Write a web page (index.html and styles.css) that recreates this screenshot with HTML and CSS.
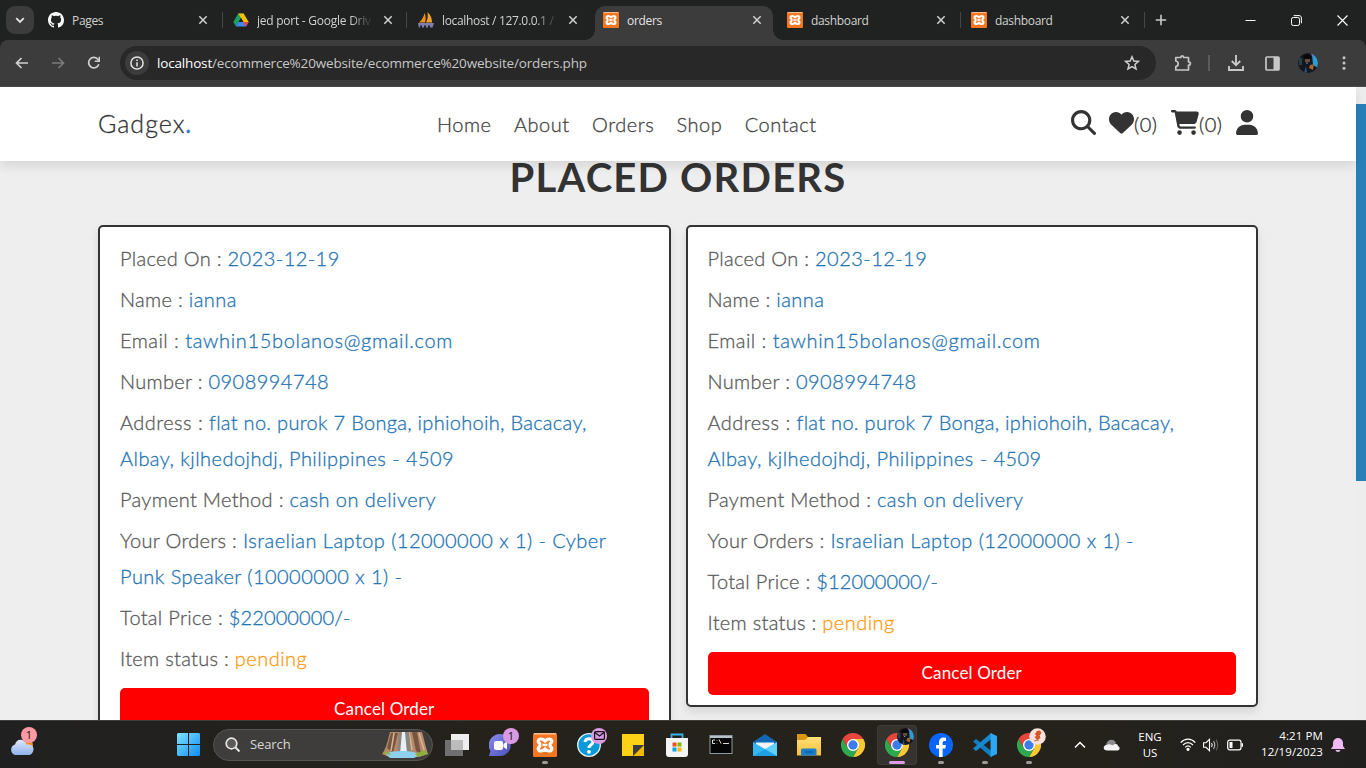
FILE: index.html
```html
<!DOCTYPE html>
<html lang="en">
<head>
<meta charset="utf-8">
<title>orders</title>
<link rel="stylesheet" href="styles.css">
</head>
<body>
<svg width="0" height="0" class="defs">
  <defs>
    <linearGradient id="winG" x1="0" y1="0" x2="1" y2="1"><stop offset="0" stop-color="#7fe3ff"/><stop offset="1" stop-color="#0f8cf5"/></linearGradient>
    <linearGradient id="cloudG" x1="0" y1="0" x2="0" y2="1"><stop offset="0" stop-color="#dfe9fb"/><stop offset="1" stop-color="#8fb2ec"/></linearGradient>
    <linearGradient id="folderG" x1="0" y1="0" x2="0" y2="1"><stop offset="0" stop-color="#ffe07a"/><stop offset="1" stop-color="#f9bf35"/></linearGradient>
    <linearGradient id="chatG" x1="0" y1="0" x2="1" y2="1"><stop offset="0" stop-color="#8a8df0"/><stop offset="1" stop-color="#4a4fb8"/></linearGradient>
  </defs>
  <symbol id="xampp" viewBox="0 0 24 24">
    <rect width="24" height="24" rx="1.5" fill="#f37623"/><rect x="1" width="22" height="1.6" fill="#fbb98a"/>
    <path d="M8 6C5 6 4.200 9 6.800 10.600V13.400C4.200 15 5 18 8 18C10 18 10.800 17.200 12 16C13.200 17.200 14 18 16 18C19 18 19.800 15 17.200 13.400V10.600C19.800 9 19 6 16 6C14 6 13.200 6.800 12 8C10.800 6.800 10 6 8 6Z" fill="none" stroke="#fff" stroke-width="3.200"/>
    <path d="M9.500 12H14.500" stroke="#fff" stroke-width="2.400"/>
  </symbol>
  <symbol id="close" viewBox="0 0 10 10"><path d="M1.300 1.300L8.700 8.700M8.700 1.300L1.300 8.700" stroke="#d0d1d0" stroke-width="1.500" fill="none"/></symbol>
  <symbol id="chrome" viewBox="0 0 48 48">
    <path d="M24 12H44.800A24 24 0 0 1 24 48L34.400 30Z" fill="#fcc934"/>
    <path d="M34.400 30L24 48A24 24 0 0 1 3.200 12L13.600 30Z" fill="#2da94f"/>
    <path d="M13.600 30L3.200 12A24 24 0 0 1 44.800 12H24Z" fill="#e8453c"/>
    <circle cx="24" cy="24" r="12" fill="#fff"/><circle cx="24" cy="24" r="9.300" fill="#3b7ded"/>
  </symbol>
  <symbol id="avatar" viewBox="0 0 20 20">
    <clipPath id="avc"><circle cx="10" cy="10" r="10"/></clipPath>
    <g clip-path="url(#avc)"><rect width="20" height="20" fill="#131820"/><path d="M14 1H20V15L15 12Z" fill="#2f9bd0"/><path d="M12.500 0H15L14.500 4Z" fill="#a857b8"/><path d="M1 5H4V12H1Z" fill="#24404a"/><path d="M7 6H12V9H7Z" fill="#6a4a3a"/><path d="M5 3L9 1L13 3V6H6Z" fill="#090909"/><path d="M12 12L16 11L15 17L11 15Z" fill="#a0672a"/><path d="M8 13L9 20H6Z" fill="#27577f"/><circle cx="9" cy="10" r=".7" fill="#bbb"/></g>
  </symbol>
</svg>

<header class="tabstrip">
  <div class="tabsearch"><svg width="10" height="7" viewBox="0 0 10 7"><path d="M1.200 1.200L5 5L8.800 1.200" fill="none" stroke="#e3e3e3" stroke-width="1.800"/></svg></div>
  <div class="tabs">
    <div class="tab t1">
      <svg class="fav" viewBox="0 0 16 16"><path fill="#fff" d="M8 0C3.580 0 0 3.580 0 8c0 3.540 2.290 6.530 5.470 7.590.4.070.55-.17.55-.38 0-.19-.01-.82-.01-1.490-2.010.37-2.530-.49-2.690-.94-.09-.23-.48-.94-.82-1.130-.28-.15-.68-.52-.01-.53.63-.01 1.080.58 1.230.82.72 1.210 1.870.87 2.330.66.07-.52.28-.87.51-1.070-1.780-.2-3.640-.89-3.640-3.950 0-.87.31-1.590.82-2.150-.08-.2-.36-1.020.08-2.120 0 0 .67-.21 2.200.82.64-.18 1.320-.27 2-.27s1.360.09 2 .27c1.530-1.040 2.200-.82 2.200-.82.44 1.100.16 1.920.08 2.120.51.56.82 1.270.82 2.150 0 3.070-1.870 3.750-3.650 3.950.29.25.54.73.54 1.480 0 1.070-.01 1.930-.01 2.200 0 .21.15.46.55.38A8 8 0 0 0 16 8c0-4.420-3.580-8-8-8z"/></svg>
      <span class="tt">Pages</span><svg class="x"><use href="#close"/></svg>
    </div>
    <div class="tab t2">
      <svg class="fav" viewBox="0 0 16 16"><path d="M5.300 1.500H10.700L8 6L3 14.500L.3 10Z" fill="#1ba260"/><path d="M5.300 1.500H10.700L15.700 10H10.300Z" fill="#fbbc04"/><path d="M5.500 10H15.700L13 14.500H3Z" fill="#4285f4"/><path d="M10.300 10H15.700L13 14.500Z" fill="#ea4335"/><path d="M8 6L10.300 10H5.700Z" fill="#202221"/></svg>
      <span class="tt fade">jed port - Google Driv</span><svg class="x"><use href="#close"/></svg>
    </div>
    <div class="tab t3">
      <svg class="fav" viewBox="0 0 16 16"><path d="M1 10.500C4 8 6 4 6.500 1C8 4 8 8 7 10.500Z" fill="#f29111"/><path d="M8 10.500C10 7 10 3 9.500 0C13 3 14 7 14 10.500Z" fill="#f5a02c"/><path d="M0 11H16L14.500 15.500H12V13.500H10V15.500H8V13.500H6V15.500H4V13.500H2V15.500H.8Z" fill="#7d7fae"/></svg>
      <span class="tt fade">localhost / 127.0.0.1 /</span><svg class="x"><use href="#close"/></svg>
    </div>
    <div class="tab t4 active">
      <svg class="fav"><use href="#xampp"/></svg><span class="tt">orders</span><svg class="x"><use href="#close"/></svg>
    </div>
    <div class="tab t5"><svg class="fav"><use href="#xampp"/></svg><span class="tt">dashboard</span><svg class="x"><use href="#close"/></svg></div>
    <div class="tab t6"><svg class="fav"><use href="#xampp"/></svg><span class="tt">dashboard</span><svg class="x"><use href="#close"/></svg></div>
  </div>
  <svg class="plus" width="12" height="12" viewBox="0 0 12 12"><path d="M6 .8V11.200M.8 6H11.200" stroke="#c9cac9" stroke-width="1.600"/></svg>
  <div class="winctl">
    <svg width="11" height="11" viewBox="0 0 11 11"><path d="M.5 5.500H10.500" stroke="#fff"/></svg>
    <svg width="11" height="11" viewBox="0 0 11 11" fill="none" stroke="#fff"><rect x=".5" y="2.500" width="8" height="8" rx="1.800"/><path d="M2.700 .6H8C9.500.6 10.400 1.500 10.400 3V8.300"/></svg>
    <svg width="11" height="11" viewBox="0 0 11 11"><path d="M.5.5L10.500 10.500M10.500.5L.5 10.500" stroke="#fff" stroke-width="1.100"/></svg>
  </div>
</header>

<div class="toolbar">
  <svg class="back" width="14" height="12" viewBox="0 0 14 12" fill="none" stroke="#d0d0d0" stroke-width="1.700"><path d="M13 6H1.800M6.500 1L1.500 6L6.500 11"/></svg>
  <svg class="fwd" width="14" height="12" viewBox="0 0 14 12" fill="none" stroke="#7b7b7b" stroke-width="1.700"><path d="M1 6H12.200M7.500 1L12.500 6L7.500 11"/></svg>
  <svg class="reload" width="14" height="14" viewBox="0 0 14 14"><path d="M11.800 8.200A5.200 5.200 0 1 1 11 3.500L12.500 5" fill="none" stroke="#d0d0d0" stroke-width="1.700"/><path d="M13 .8V6H7.800V4.500H11.500V.8Z" fill="#d0d0d0"/></svg>
  <div class="omni">
    <span class="info"><svg width="14" height="14" viewBox="0 0 14 14"><circle cx="7" cy="7" r="6.100" fill="none" stroke="#e3e3e3" stroke-width="1.500"/><path d="M7 6.200V10.500M7 3.500V5" stroke="#e3e3e3" stroke-width="1.500"/></svg></span>
    <span class="url"><b>localhost</b>/ecommerce%20website/ecommerce%20website/orders.php</span>
    <svg class="star" width="16" height="16" viewBox="0 0 16 16"><path d="M8 1.800L9.800 6L14.400 6.400L10.900 9.400L12 13.900L8 11.500L4 13.900L5.100 9.400L1.600 6.400L6.200 6Z" fill="none" stroke="#cfcfcf" stroke-width="1.500"/></svg>
  </div>
  <svg class="ext" width="18" height="18" viewBox="0 0 18 18"><path d="M1.800 3.500H6.800C6.800 1.200 9.700 1.200 9.700 3.500H14.500V7.800C17 7.800 17 11.200 14.500 11.200V16H1.800V12.500C5 12 5 7.500 1.800 7Z" fill="none" stroke="#c7c7c7" stroke-width="1.700" stroke-linejoin="round"/></svg>
  <i class="tsep"></i>
  <svg class="dl" width="16" height="16" viewBox="0 0 16 16" fill="none" stroke="#c7c7c7" stroke-width="1.900"><path d="M8 0V9.500M3.800 6L8 10.200L12.200 6M1 11V15H15V11"/></svg>
  <svg class="side" width="15" height="15" viewBox="0 0 15 15"><rect x="1" y="1" width="13" height="13" rx="1" fill="none" stroke="#c7c7c7" stroke-width="1.700"/><path d="M8.500 1H14V14H8.500Z" fill="#c7c7c7"/></svg>
  <svg class="ava" width="20" height="20"><use href="#avatar"/></svg>
  <svg class="dots" width="4" height="14" viewBox="0 0 4 14" fill="#c7c7c7"><circle cx="2" cy="1.700" r="1.500"/><circle cx="2" cy="7" r="1.500"/><circle cx="2" cy="12.300" r="1.500"/></svg>
</div>

<div class="viewport">
  <div class="page">
    <div class="sitehead">
      <a class="logo">Gadgex<span>.</span></a>
      <nav class="nav"><a>Home</a><a>About</a><a>Orders</a><a>Shop</a><a>Contact</a></nav>
      <div class="icons">
        <svg width="25" height="25" viewBox="0 0 512 512"><path d="M416 208c0 45.900-14.900 88.300-40 122.700L502.600 457.400c12.500 12.500 12.500 32.800 0 45.300s-32.800 12.500-45.300 0L330.700 376c-34.400 25.200-76.800 40-122.700 40C93.100 416 0 322.900 0 208S93.100 0 208 0S416 93.100 416 208zM208 352a144 144 0 1 0 0-288 144 144 0 1 0 0 288z"/></svg>
        <span class="heart"><svg width="25" height="25" viewBox="0 0 512 512"><path d="M47.600 300.400L228.300 469.100c7.500 7 17.400 10.900 27.700 10.900s20.200-3.900 27.700-10.900L464.400 300.400c30.400-28.300 47.600-68 47.600-109.500v-5.800c0-69.900-50.500-129.500-119.400-141C347 36.500 300.600 51.400 268 84L256 96 244 84c-32.600-32.600-79-47.500-124.600-39.900C50.500 55.600 0 115.200 0 185.100v5.800c0 41.500 17.200 81.200 47.600 109.500z"/></svg><em>(0)</em></span>
        <span class="cart"><svg width="28" height="25" viewBox="0 0 576 512"><path d="M0 24C0 10.700 10.700 0 24 0H69.500c22 0 41.500 12.800 50.600 32h411c26.300 0 45.500 25 38.600 50.400l-41 152.300c-8.500 31.400-37 53.300-69.500 53.300H170.700l5.400 28.500c2.200 11.300 12.100 19.500 23.600 19.500H488c13.300 0 24 10.700 24 24s-10.700 24-24 24H199.700c-34.600 0-64.300-24.600-70.700-58.500L77.400 54.500c-.7-3.800-4-6.500-7.900-6.500H24C10.700 48 0 37.300 0 24zM128 464a48 48 0 1 1 96 0 48 48 0 1 1-96 0zm336-48a48 48 0 1 1 0 96 48 48 0 1 1 0-96z"/></svg><em>(0)</em></span>
        <svg class="user" width="22" height="25" viewBox="0 0 448 512"><path d="M224 256A128 128 0 1 0 224 0a128 128 0 1 0 0 256zm-45.700 48C79.800 304 0 383.800 0 482.300C0 498.700 13.300 512 29.700 512H418.300c16.400 0 29.700-13.300 29.700-29.700C448 383.800 368.200 304 269.700 304H178.300z"/></svg>
      </div>
    </div>
    <h1 class="heading">Placed Orders</h1>
    <div class="cards">
      <div class="card">
        <p>Placed On : <span>2023-12-19</span></p>
        <p>Name : <span>ianna</span></p>
        <p class="em">Email : <span class="mail">tawhin15bolanos@gmail.com</span></p>
        <p>Number : <span>0908994748</span></p>
        <p class="em">Address : <span><span class="addr">flat no. purok 7 Bonga, iphiohoih, Bacacay,</span><br>Albay, kjlhedojhdj, Philippines - 4509</span></p>
        <p>Payment Method : <span>cash on delivery</span></p>
        <p>Your Orders : <span>Israelian Laptop (12000000 x 1) - Cyber<br>Punk Speaker (10000000 x 1) -</span></p>
        <p>Total Price : <span class="price">$22000000/-</span></p>
        <p>Item status : <span class="pending">pending</span></p>
        <div class="btn">Cancel Order</div>
      </div>
      <div class="card">
        <p>Placed On : <span>2023-12-19</span></p>
        <p>Name : <span>ianna</span></p>
        <p class="em">Email : <span class="mail">tawhin15bolanos@gmail.com</span></p>
        <p>Number : <span>0908994748</span></p>
        <p class="em">Address : <span><span class="addr">flat no. purok 7 Bonga, iphiohoih, Bacacay,</span><br>Albay, kjlhedojhdj, Philippines - 4509</span></p>
        <p>Payment Method : <span>cash on delivery</span></p>
        <p>Your Orders : <span>Israelian Laptop (12000000 x 1) -</span></p>
        <p>Total Price : <span class="price">$12000000/-</span></p>
        <p>Item status : <span class="pending">pending</span></p>
        <div class="btn">Cancel Order</div>
      </div>
    </div>
  </div>
  <div class="scroll"><div class="thumb"></div></div>
</div>

<footer class="taskbar">
  <div class="weather"><svg width="26" height="20" viewBox="0 0 26 20"><circle cx="19" cy="9" r="5" fill="#f28b1d"/><path d="M6 19a5.500 5.500 0 0 1 0-10.500C7 4.500 10 3 13 4c3 .5 4 3 4.500 4.500C22 8 25 10 24.500 14c-.5 3-2.500 5-5 5Z" fill="url(#cloudG)"/></svg><b class="badge pink">1</b></div>
  <svg class="start" width="23" height="23" viewBox="0 0 23 23" fill="url(#winG)"><path d="M1 0H11V11H0V1ZM12 0H22L23 1V11H12ZM0 12H11V23H1L0 22ZM12 12H23V22L22 23H12Z"/></svg>
  <div class="search">
    <svg width="16" height="16" viewBox="0 0 16 16" fill="none" stroke="#e6e6e6" stroke-width="1.700"><circle cx="6.500" cy="6.500" r="5.300" fill="#5a5a5a"/><path d="M10.500 10.500L14.500 14.500" stroke-width="2"/></svg>
    <span>Search</span>
    <svg class="falls" width="48" height="27" viewBox="0 0 48 27"><path d="M9 1H41C43 8 45 17 47 23L38 26H8L1 23C5 18 7 9 9 1Z" fill="#b58a68"/><path d="M10 2L6 17L12 22L17 2ZM31 1L35 20L40 23L36 1Z" fill="#785543"/><path d="M13 2L10 20M38 2L44 22M28 1L31 19" stroke="#d9b894" stroke-width="1.500"/><path d="M18 1H28L30 23H16Z" fill="#8b8580"/><path d="M21 1H24L26 23H19Z" fill="#e8eff5"/><path d="M4 22C14 19 34 19 39 24L33 27H9Z" fill="#8fd0ef"/><path d="M2 22L7 20L10 24M34 23L44 19L47 23L37 26Z" fill="#8fae3b"/></svg>
  </div>
  <div class="apps">
    <div class="app"><svg width="24" height="24" viewBox="0 0 24 24"><rect x="6" y="1" width="18" height="16" fill="#eee"/><rect y="7" width="18" height="16" fill="#707070"/><rect x="6" y="7" width="12" height="10" fill="#bcbcbc"/></svg></div>
    <div class="app"><svg width="24" height="24" viewBox="0 0 24 24"><path d="M0 23L1.500 18A11 11 0 1 1 11.500 23Z" fill="url(#chatG)"/><rect x="5" y="8" width="9" height="9" rx="2" fill="#fff"/><path d="M14.500 11L18 8.500V16.500L14.500 14Z" fill="#fff"/></svg><b class="badge lilac">1</b></div>
    <div class="app"><svg width="24" height="24"><use href="#xampp"/></svg><i class="dot"></i></div>
    <div class="app"><svg width="24" height="24" viewBox="0 0 24 24"><circle cx="12" cy="12" r="11.300" fill="#0d9ad9" stroke="#e8f4fa" stroke-width="1.300"/><path d="M8 9C8 4.500 16 4.500 16 9C16 12 12 11.500 12 15" fill="none" stroke="#fff" stroke-width="3"/><circle cx="12" cy="18.800" r="1.900" fill="#fff"/></svg><b class="badge lilac"><svg width="11" height="9" viewBox="0 0 11 9" fill="none" stroke="#111" stroke-width="1.200"><rect x=".6" y=".6" width="9.800" height="7.800" rx="1"/><path d="M1 1.500L5.500 5L10 1.500"/></svg></b></div>
    <div class="app"><svg width="24" height="24" viewBox="0 0 24 24"><path d="M1 1H23V12H12V23H1Z" fill="#fcd116"/><path d="M12 23V12H23Z" fill="#3c3c3c"/><path d="M12 23L23 12V23Z" fill="#eebb00"/></svg></div>
    <div class="app"><svg width="24" height="24" viewBox="0 0 24 24"><path d="M6.500 6V1.500H17.500V6" fill="none" stroke="#36b5ea" stroke-width="1.800"/><path d="M1 5H23V21Q23 24 20 24H4Q1 24 1 21Z" fill="#f4f4f4"/><path d="M7.500 9.500H11.500V13.500H7.500Z" fill="#f25022"/><path d="M12.500 9.500H16.500V13.500H12.500Z" fill="#7fba00"/><path d="M7.500 14.500H11.500V18.500H7.500Z" fill="#00a4ef"/><path d="M12.500 14.500H16.500V18.500H12.500Z" fill="#ffb900"/></svg></div>
    <div class="app"><svg width="24" height="24" viewBox="0 0 24 24"><rect x="1" y="2.500" width="22" height="18" fill="#050505" stroke="#8e99a3"/><path d="M1 4H23" stroke="#b9c1c8" stroke-width="2"/><path d="M6 7H3.500V10.500H6M8 7.500V8M8 10V10.500M10 6.500L12 10.500M14 10.500H20" stroke="#ddd" fill="none"/></svg></div>
    <div class="app"><svg width="24" height="24" viewBox="0 0 24 24"><path d="M0 9L12 1L24 9V12H0Z" fill="#1267b4"/><path d="M3 9.500H21V18H3Z" fill="#f5f5f5"/><path d="M0 9L24 23H0Z" fill="#35b8f1"/><path d="M24 9V23H0Z" fill="#5fd0f8"/><path d="M12 16L24 23H0Z" fill="#1f9fe4"/></svg></div>
    <div class="app"><svg width="24" height="24" viewBox="0 0 24 24"><path d="M0 1H8.500L11 4H24V10H0Z" fill="#d9960f"/><path d="M0 7H8L11 4H24V22.500H0Z" fill="url(#folderG)"/><path d="M4 22.500V17Q4 15.500 5.500 15.500H18Q19.500 15.500 19.500 17V22.500Z" fill="#1b7fcd"/><path d="M8 19H16" stroke="#105a9c" stroke-width="1.400"/></svg></div>
    <div class="app"><svg width="24" height="24"><use href="#chrome"/></svg></div>
    <div class="app on"><svg width="24" height="24"><use href="#chrome"/></svg><svg class="mini" width="17" height="17" viewBox="0 0 20 20"><use href="#avatar" width="20" height="20"/></svg><i class="dot wide"></i></div>
    <div class="app"><svg width="24" height="24" viewBox="0 0 24 24"><circle cx="12" cy="12" r="12" fill="#0866ff"/><path d="M10 24V15.500H7V12H10V9.500C10 6 12 4.500 14.500 4.500Q16 4.500 17 4.800V8H15.500C14 8 13.600 8.700 13.600 9.800V12H17L16.300 15.500H13.600V24Z" fill="#fff"/></svg><i class="dot"></i></div>
    <div class="app"><svg width="24" height="24" viewBox="0 0 24 24"><path d="M0 8.500L3 6L18.500 18V24L17.500 23.500Z" fill="#0e7dc4"/><path d="M0 15.500L3 18L18.500 6V0L17.500.5Z" fill="#1688d0"/><path d="M17.500 0L24 3V21L17.500 24Z" fill="#2ba6f0"/></svg><i class="dot"></i></div>
    <div class="app"><svg width="24" height="24"><use href="#chrome"/></svg><svg class="mini" width="17" height="17" viewBox="0 0 17 17"><circle cx="8.500" cy="8.500" r="8.300" fill="#fbe0dc"/><path d="M6 6L8 3L11 2.500L12.500 5L10.500 7.500L11.500 10L8 12L5.500 9L7.500 8Z" fill="#d9541e"/><path d="M5 13L10 12" stroke="#c9733f"/></svg><i class="dot"></i></div>
  </div>
  <svg class="chev" width="12" height="8" viewBox="0 0 12 8"><path d="M1 6.500L6 1.500L11 6.500" fill="none" stroke="#fff" stroke-width="1.500"/></svg>
  <svg class="onedrive" width="17" height="12" viewBox="0 0 17 12"><path d="M3 6C4 0 11-1 13 4L10 8Z" fill="#8c8c8c"/><path d="M4 11.500C0 11.500-.5 6.500 3.500 6C6 4.500 8 5.500 9.500 6.500C12 4 15 5 15 7C17.500 8 17 11.500 14.500 11.500Z" fill="#f4f4f4"/></svg>
  <div class="lang">ENG<br>US</div>
  <div class="tray">
    <svg width="16" height="13" viewBox="0 0 16 13" fill="none" stroke="#fff" stroke-width="1.200"><path d="M.7 4.700C5 0 11 0 15.300 4.700M3 7C6 3.800 10 3.800 13 7M5.200 9.300C7 7.500 9 7.500 10.800 9.300"/><circle cx="8" cy="11.300" r="1" fill="#fff"/></svg>
    <svg width="17" height="14" viewBox="0 0 17 14" fill="none" stroke="#fff" stroke-width="1.100"><path d="M.6 4.700H3L6.500 1.300V12.700L3 9.300H.6Z"/><path d="M8.500 5Q10 7 8.500 9"/><path d="M10.500 3Q13 7 10.500 11" stroke="#bbb"/><path d="M13 1.500Q16.500 7 13 12.500" stroke="#666"/></svg>
    <svg width="17" height="12" viewBox="0 0 17 12"><rect x=".7" y="1.200" width="13.300" height="9.600" rx="2" fill="none" stroke="#fff" stroke-width="1.200"/><path d="M2.500 3H5.500V9H2.500ZM14.500 4.200H16V7.800H14.500Z" fill="#fff"/></svg>
  </div>
  <div class="clock">4:21 PM<br>12/19/2023</div>
  <svg class="bell" width="14" height="15" viewBox="0 0 14 15" fill="#efb9f4"><path d="M2 6A5 5 0 0 1 12 6V9L13.800 11.500V12H.2V11.500L2 9ZM4.500 13H9.500Q9 15 7 15Q5 15 4.500 13Z"/></svg>
</footer>
</body>
</html>
```
FILE: styles.css
```css
* { box-sizing: border-box; margin: 0; padding: 0; }
body { width: 1366px; height: 768px; overflow: hidden; background: #202221; font-family: "Open Sans", "Noto Sans", sans-serif; display: flex; flex-direction: column; }
svg { display: block; flex: none; }
.defs { position: absolute; }

.tabstrip { height: 40px; flex: none; background: #202221; display: flex; align-items: center; }
.tabsearch { width: 28px; height: 28px; margin-left: 6px; border-radius: 9px; background: #3c3c3c; display: flex; align-items: center; justify-content: center; }
.tabs { display: flex; height: 40px; align-items: center; width: 1111px; }
.tab { display: flex; align-items: center; height: 16px; width: 184px; padding-left: 12px; padding-right: 12px; border-right: 1.5px solid #454746; font-size: 12px; letter-spacing: -.33px; color: #d0d2d0; flex: none; }
.tab .fav { width: 16px; height: 16px; margin-right: 8px; }
.tab .tt { width: 117px; white-space: nowrap; height: 18px; line-height: 20px; }
.tab .x { width: 10px; height: 10px; margin-left: auto; }
.fade { -webkit-mask-image: linear-gradient(90deg, #000 80%, transparent 100%); mask-image: linear-gradient(90deg, #000 80%, transparent 100%); }
.t1 { width: 189px; padding-left: 14px; padding-right: 14px; }
.t2 { width: 184px; padding-left: 10px; padding-right: 13px; letter-spacing: -.25px; }
.t2 .tt, .t3 .tt { width: 116px; }
.t3 { width: 188px; padding-left: 11px; padding-right: 17px; border-right: 0; }
.t4.active { width: 178px; height: 34px; margin-top: 6px; background: #3c3c3c; border: 0; border-radius: 10px 10px 0 0; padding: 0 11px 6px 8px; position: relative; color: #e3e3e3; }
.active::before, .active::after { content: ""; position: absolute; bottom: 0; width: 10px; height: 10px; }
.active::before { left: -10px; background: radial-gradient(circle at 0 0, transparent 9.5px, #3c3c3c 10px); }
.active::after { right: -10px; background: radial-gradient(circle at 100% 0, transparent 9.5px, #3c3c3c 10px); }
.t5 { width: 188px; padding-left: 14px; padding-right: 14px; }
.t6 { width: 184px; padding-left: 10px; padding-right: 14px; }
.plus { margin-left: 10px; }
.winctl { display: flex; gap: 35px; margin-left: auto; margin-right: 18px; }

.toolbar { height: 47px; flex: none; background: #3c3c3c; border-radius: 8px 8px 0 0; border-bottom: 1px solid #4a4a4a; display: flex; align-items: center; padding-left: 15px; }
.fwd { margin-left: 22px; }
.reload { margin-left: 22px; }
.omni { width: 1036px; height: 34px; margin-left: 19px; border-radius: 17px; background: #282828; display: flex; align-items: center; padding-left: 5px; }
.info { width: 24px; height: 24px; border-radius: 50%; background: #3c3c3c; display: flex; align-items: center; justify-content: center; }
.url { margin-left: 8px; font-size: 13.5px; letter-spacing: -.17px; color: #c7c7c7; line-height: 20px; white-space: nowrap; }
.url b { font-weight: 400; color: #fff; }
.star { margin-left: auto; margin-right: 16px; }
.ext { margin-left: 18px; }
.tsep { width: 2px; height: 16px; background: #5c5c5c; margin-left: 16px; }
.dl { margin-left: 18px; }
.side { margin-left: 21px; }
.ava { margin-left: 18px; }
.dots { margin-left: 24px; }

.viewport { height: 633px; flex: none; display: flex; background: #eee; overflow: hidden; font-family: Lato, sans-serif; }
.page { width: 1356px; background: #eee; }
.sitehead { height: 74px; background: #fff; box-shadow: 0 5px 10px rgba(0,0,0,.1); position: relative; z-index: 2; display: flex; align-items: center; padding: 0 98px; color: #333; font-weight: 300; -webkit-text-stroke-width: .3px; }
.logo { font-size: 25px; width: 339px; letter-spacing: 1px; margin-top: -2px; }
.logo span { color: #2980b9; font-weight: 400; }
.nav { display: flex; gap: 22.4px; font-size: 20px; letter-spacing: .52px; color: #444; width: 400px; white-space: nowrap; margin-top: -1px; }
.icons { display: flex; align-items: center; margin-left: auto; margin-top: -3px; fill: #333; font-size: 20px; color: #333; }
.icons em { font-style: normal; width: 24px; letter-spacing: .5px; margin-top: 3px; }
.icons span { display: flex; align-items: center; }
.heart { margin-left: 13px; }
.cart { margin-left: 13px; }
.user { margin-left: 13px; }
.heading { text-align: center; font-size: 40px; line-height: 48px; margin-top: -8px; height: 72px; letter-spacing: 1.2px; text-transform: uppercase; color: #333; font-weight: 700; }
.cards { display: grid; grid-template-columns: 1fr 1fr; gap: 15px; width: 1160px; margin: 0 auto; align-items: start; }
.card { background: #fff; border: 2px solid #333; border-radius: 5px; padding: 8px 20px 10px; box-shadow: 0 5px 10px rgba(0,0,0,.1); font-size: 20px; font-weight: 300; letter-spacing: .3px; line-height: 36px; color: #5a5a5a; display: flow-root; white-space: nowrap; -webkit-text-stroke-width: .3px; }
.card p { margin: 5px 0; }
.card p.em { letter-spacing: .45px; }
.card p span { color: #2474b4; letter-spacing: .46px; }
.card p .mail { letter-spacing: .68px; }
.card p .addr { letter-spacing: .3px; }
.card p .price { letter-spacing: .1px; }
.card p .pending { color: #ff9a10; }
.btn { height: 43px; margin-top: 12px; background: #f00; color: #fff; border-radius: 5px; text-align: center; font-size: 17px; font-weight: 400; letter-spacing: .15px; line-height: 42px; -webkit-text-stroke-width: 0; }
.scroll { width: 10px; background: #ededed; padding-top: 17px; }
.thumb { height: 377px; background: #2980b9; }

.taskbar { height: 48px; flex: none; background: linear-gradient(90deg, #202020, #25221c 35%, #25221c 80%, #20201f); border-top: 1px solid #403e3a; display: flex; align-items: center; color: #fff; }
.weather { position: relative; margin-left: 9px; width: 28px; height: 28px; padding-top: 5px; }
.badge { position: absolute; width: 16px; height: 16px; border-radius: 50%; font-size: 11px; font-weight: 400; color: #111; display: flex; align-items: center; justify-content: center; }
.pink { background: #ff99a4; left: 12px; top: -4px; }
.lilac { background: #d999e3; right: 2px; top: 3px; }
.start { margin-left: 140px; }
.search { width: 220px; height: 32px; margin-left: 13px; border-radius: 16px; background: #3e3d3b; border: 1px solid #555451; display: flex; align-items: center; padding-left: 11px; font-size: 13px; letter-spacing: -.1px; color: #d8d8d8; flex: none; }
.search span { margin-left: 9px; margin-top: -2px; }
.falls { margin-left: auto; margin-right: 3px; }
.apps { display: flex; gap: 4px; margin-left: 4px; flex: none; }
.app { width: 40px; height: 40px; border-radius: 4px; display: flex; align-items: center; justify-content: center; position: relative; }
.on { background: #36332f; box-shadow: inset 0 0 0 1px #403d39; }
.dot { position: absolute; bottom: 1px; left: 17px; width: 6px; height: 3px; border-radius: 2px; background: #9b9a98; }
.wide { width: 16px; left: 12px; background: #dc9de6; }
.mini { position: absolute; right: 3px; top: 3px; }
.chev { margin-left: 25px; }
.onedrive { margin-left: 17px; }
.lang { width: 40px; margin-left: 10px; text-align: center; font-size: 11.5px; line-height: 16px; }
.tray { display: flex; align-items: center; gap: 7px; margin-left: 10px; }
.clock { width: 74px; text-align: right; font-size: 11.5px; line-height: 16px; margin-left: auto; margin-top: -1px; letter-spacing: .1px; }
.bell { margin-left: 8px; margin-right: 21px; flex: none; }
```
